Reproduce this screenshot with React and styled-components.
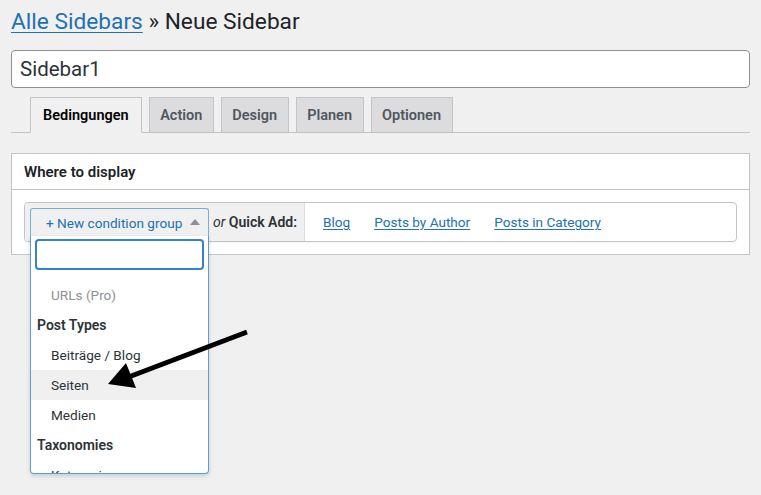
import React from "react";
import styled, { createGlobalStyle } from "styled-components";

const GlobalStyle = createGlobalStyle`
  html, body {
    margin: 0;
    background: #f0f0f1;
  }
  body {
    font-family: Roboto, "Noto Sans", sans-serif;
    color: #1d2327;
  }
  * { box-sizing: border-box; }
`;

const Page = styled.div`
  position: relative;
  height: 495px;
  overflow: hidden;
  padding: 7px 11px 0;
`;

const Heading = styled.h1`
  margin: 0;
  font-size: 22.7px;
  font-weight: 400;
  line-height: 29px;
  color: #1d2327;
  a {
    color: #2271b1;
    text-decoration: underline;
    text-underline-offset: 3px;
    text-decoration-thickness: 1px;
  }
`;

const TitleInput = styled.div`
  margin-top: 14px;
  height: 38px;
  background: #fff;
  border: 1px solid #8c8f94;
  border-radius: 4px;
  padding: 0 8px;
  display: flex;
  align-items: center;
  font-size: 20.5px;
  color: #2c3338;
`;

const TabBar = styled.div`
  margin-top: 9px;
  display: flex;
  gap: 7px;
  padding-left: 19px;
  border-bottom: 1px solid #c3c4c7;
  height: 36px;
  align-items: flex-end;
`;

const Tab = styled.div`
  height: 36px;
  margin-bottom: -1px;
  padding: 0 ${(p) => (p.$active ? "12px" : "10.5px")};
  display: flex;
  align-items: center;
  font-size: 14.5px;
  font-weight: 600;
  border: 1px solid #c3c4c7;
  border-bottom: ${(p) => (p.$active ? "1px solid #f0f0f1" : "1px solid #c3c4c7")};
  background: ${(p) => (p.$active ? "#f0f0f1" : "#dcdcde")};
  color: ${(p) => (p.$active ? "#000" : "#50575e")};
`;

const Panel = styled.div`
  margin-top: 20px;
  background: #fff;
  border: 1px solid #c3c4c7;
`;

const PanelHead = styled.div`
  height: 36px;
  padding: 0 12px;
  display: flex;
  align-items: center;
  font-size: 15px;
  font-weight: 600;
  border-bottom: 1px solid #c3c4c7;
`;

const PanelBody = styled.div`
  padding: 12px 12px 12px;
`;

const Toolbar = styled.div`
  display: flex;
  height: 40px;
  border: 1px solid #c3c4c7;
  border-radius: 4px;
  box-shadow: 0 1px 1px rgba(0, 0, 0, 0.04);
`;

const ToolLeft = styled.div`
  display: flex;
  align-items: flex-start;
  padding: 5px 5px 0 5px;
  background: #f0f0f1;
  border-right: 1px solid #dcdcde;
  border-radius: 4px 0 0 4px;
  width: 280px;
  font-size: 14px;
  color: #2c3338;
`;

const QuickLabel = styled.span`
  margin-left: 4px;
  line-height: 28px;
  white-space: nowrap;
  em { font-style: italic; }
  b { font-weight: 600; }
`;

const ToolRight = styled.div`
  display: flex;
  align-items: center;
  gap: 24px;
  padding-left: 18px;
  font-size: 13.6px;
`;

const QuickLink = styled.a`
  color: #2271b1;
  text-decoration: underline;
  text-underline-offset: 2px;
`;

const SelectWrap = styled.div`
  position: relative;
  width: 179px;
  flex-shrink: 0;
`;

const SelectButton = styled.div`
  height: 29px;
  display: flex;
  align-items: center;
  padding: 0 8px 0 15px;
  border: 1px solid #72aee6;
  border-bottom-color: #dcdcde;
  border-radius: 3px 3px 0 0;
  background: #f0f0f1;
  color: #2271b1;
  font-size: 13.6px;
  white-space: nowrap;
  span { flex: 1; }
`;

const Caret = styled.i`
  width: 0;
  height: 0;
  border-left: 5px solid transparent;
  border-right: 5px solid transparent;
  border-bottom: 6px solid #8c8f94;
  margin-top: -2px;
`;

const Dropdown = styled.div`
  position: absolute;
  top: 28px;
  left: 0;
  width: 100%;
  height: 238px;
  overflow: hidden;
  background: #fff;
  border: 1px solid #5b9dd9;
  border-top: none;
  border-radius: 0 0 4px 4px;
  box-shadow: 0 2px 4px rgba(0, 0, 0, 0.15);
  z-index: 2;
`;

const SearchBox = styled.div`
  margin: 3px 4px 10px;
  height: 31px;
  border: 2px solid #3582c4;
  border-radius: 4px;
  background: #fff;
`;

const Option = styled.div`
  height: 30px;
  display: flex;
  align-items: center;
  font-size: ${(p) => (p.$group ? "14px" : "13.6px")};
  padding-left: ${(p) => (p.$group ? "6px" : "20px")};
  font-weight: ${(p) => (p.$group ? 600 : 400)};
  color: ${(p) => (p.$disabled ? "#8c8f94" : "#2c3338")};
  background: ${(p) => (p.$hover ? "#f0f0f1" : "transparent")};
`;

const ArrowOverlay = styled.svg`
  position: absolute;
  left: 0;
  top: 0;
  pointer-events: none;
  z-index: 3;
`;

const tabs = ["Bedingungen", "Action", "Design", "Planen", "Optionen"];

const options = [
  { label: "URLs (Pro)", disabled: true },
  { label: "Post Types", group: true },
  { label: "Beiträge / Blog" },
  { label: "Seiten", hover: true },
  { label: "Medien" },
  { label: "Taxonomies", group: true },
  { label: "Kategorien" },
];

export default function App() {
  return (
    <>
      <GlobalStyle />
      <Page>
        <Heading>
          <a href="#">Alle Sidebars</a> » Neue Sidebar
        </Heading>
        <TitleInput>Sidebar1</TitleInput>
        <TabBar>
          {tabs.map((t, i) => (
            <Tab key={t} $active={i === 0}>
              {t}
            </Tab>
          ))}
        </TabBar>
        <Panel>
          <PanelHead>Where to display</PanelHead>
          <PanelBody>
            <Toolbar>
              <ToolLeft>
                <SelectWrap>
                  <SelectButton>
                    <span>+ New condition group</span>
                    <Caret />
                  </SelectButton>
                  <Dropdown>
                    <SearchBox />
                    {options.map((o) => (
                      <Option
                        key={o.label}
                        $group={o.group}
                        $disabled={o.disabled}
                        $hover={o.hover}
                      >
                        {o.label}
                      </Option>
                    ))}
                  </Dropdown>
                </SelectWrap>
                <QuickLabel>
                  <em>or</em> <b>Quick Add:</b>
                </QuickLabel>
              </ToolLeft>
              <ToolRight>
                <QuickLink href="#">Blog</QuickLink>
                <QuickLink href="#">Posts by Author</QuickLink>
                <QuickLink href="#">Posts in Category</QuickLink>
              </ToolRight>
            </Toolbar>
          </PanelBody>
        </Panel>
        <ArrowOverlay width="761" height="495" viewBox="0 0 761 495">
          <line x1="247" y1="332" x2="126" y2="378" stroke="#000" strokeWidth="5" />
          <polygon points="108,384 126,363 136,388" fill="#000" />
        </ArrowOverlay>
      </Page>
    </>
  );
}
